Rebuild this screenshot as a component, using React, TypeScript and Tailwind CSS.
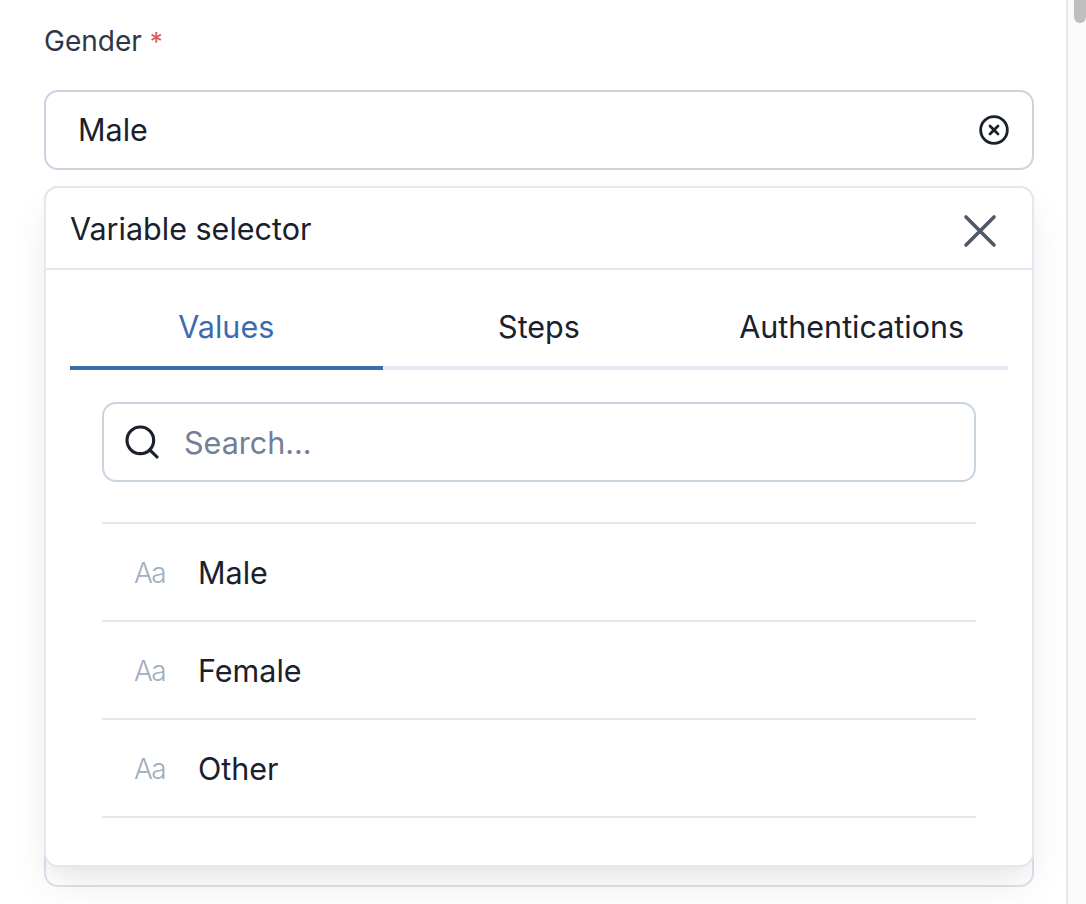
import { CircleX, Search } from "lucide-react";

const items = ["Male", "Female", "Other"];
const tabs = ["Values", "Steps", "Authentications"];

export default function App() {
  return (
    <div
      className="h-[904px] w-[1086px] overflow-hidden bg-white flex text-[#1a202c]"
      style={{ fontFamily: "Inter, sans-serif" }}
    >
      <div className="flex-1 pl-[44px] pr-[32px]">
        <div className="h-[90px] pt-[24px] text-[28px] leading-[34px] text-[#2d3748]">
          Gender <span className="text-[26px] text-[#dc5a52]">*</span>
        </div>

        <div className="h-[80px] border-2 border-[#cbd5e0] rounded-[14px] flex items-center justify-between pl-[32px] pr-[22px] text-[30.5px]">
          <span>Male</span>
          <CircleX size={32} strokeWidth={2.1} />
        </div>

        <div className="mt-[16px] h-[701px] border-2 border-[#dde2ec] rounded-[14px]">
          <div className="-m-[2px] h-[681px] bg-white border-2 border-[#e2e8f0] rounded-[14px] shadow-[0_20px_40px_-5px_rgba(0,0,0,0.09),0_8px_16px_-4px_rgba(0,0,0,0.03)]">
            <div className="h-[82px] border-b-2 border-[#e2e8f0] flex items-center justify-between pl-[24px] pr-[34px] text-[30.5px]">
              <span className="pt-[2px]">Variable selector</span>
              <svg width="36" height="36" viewBox="0 0 36 36" className="mt-[6px] text-[#4f5868]" fill="none" stroke="currentColor" strokeWidth="3.6" strokeLinecap="round">
                <path d="M4 4 32 32M32 4 4 32" />
              </svg>
            </div>

            <div className="mx-[24px] mt-[24px] flex border-b-4 border-[#e9e7f5] h-[76px]">
              {tabs.map((t, i) => (
                <div
                  key={t}
                  className={
                    i === 0
                      ? "flex-1 -mb-[4px] border-b-4 border-[#3e6bb0] text-[#3e6bb0] text-center text-[30.5px] leading-[66px]"
                      : "flex-1 text-center text-[30.5px] leading-[66px]"
                  }
                >
                  {t}
                </div>
              ))}
            </div>

            <div className="mx-[56px] mt-[32px]">
              <div className="h-[80px] border-2 border-[#cbd5e0] rounded-[14px] flex items-center pl-[18px] gap-[22px]">
                <Search size={40} strokeWidth={1.9} />
                <span className="pt-[2px] text-[30.5px] text-[#718096]">Search...</span>
              </div>
              <div className="mt-[40px] border-t-2 border-[#e2e8f0]">
                {items.map((v) => (
                  <div
                    key={v}
                    className="h-[98px] pt-[2px] border-b-2 border-[#e2e8f0] flex items-center pl-[32px] text-[30.5px]"
                  >
                    <span className="w-[64px] text-[28px] tracking-[-1.5px] text-[#a0aec0] font-light">Aa</span>
                    <span>{v}</span>
                  </div>
                ))}
              </div>
            </div>
          </div>
        </div>
      </div>

      <div className="w-[20px] border-l-2 border-[#e8e8e8] bg-[#fafafa] pl-[6px]">
        <div className="h-[23px] bg-[#bfbfbf] rounded-b-[6px]" />
      </div>
    </div>
  );
}
